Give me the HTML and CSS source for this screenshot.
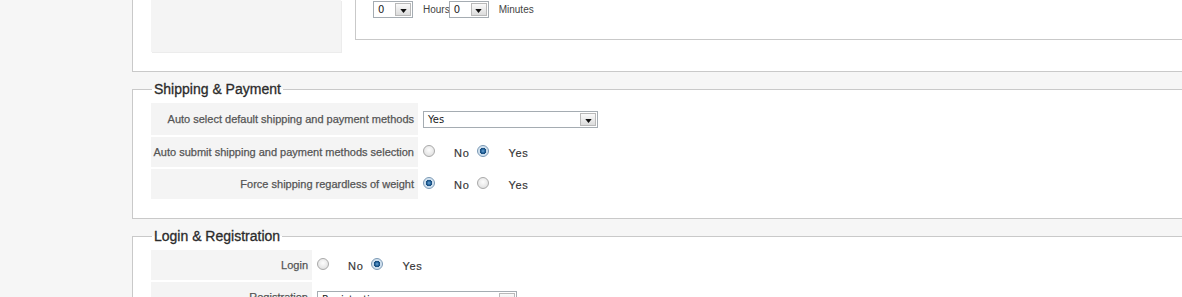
FILE: index.html
```html
<!DOCTYPE html>
<html lang="en">
<head>
  <meta charset="UTF-8">
  <title>Checkout Settings</title>
  <link rel="stylesheet" href="styles.css">
</head>
<body>
<div class="main">
  <!-- Previous section, scrolled past -->
  <div class="top-panel">
    <div class="top-label"></div>
    <div class="time-box">
      <span class="combo combo-small"><span class="combo-val">0</span><span class="combo-btn"><svg viewBox="0 0 8 5"><path d="M0 0h8L4 5z"/></svg></span></span>
      <span class="time-unit">Hours</span>
      <span class="combo combo-small"><span class="combo-val">0</span><span class="combo-btn"><svg viewBox="0 0 8 5"><path d="M0 0h8L4 5z"/></svg></span></span>
      <span class="time-unit">Minutes</span>
    </div>
  </div>

  <!-- Shipping & Payment -->
  <fieldset class="section">
    <legend>Shipping &amp; Payment</legend>
    <div class="rows rows-shipping">
      <div class="key">Auto select default shipping and payment methods</div>
      <div class="val">
        <span class="combo combo-wide"><span class="combo-val">Yes</span><span class="combo-btn"><svg viewBox="0 0 8 5"><path d="M0 0h8L4 5z"/></svg></span></span>
      </div>
      <div class="key">Auto submit shipping and payment methods selection</div>
      <div class="val">
        <label class="opt"><input type="radio" name="autosubmit"><span>No</span></label>
        <label class="opt"><input type="radio" name="autosubmit" checked><span>Yes</span></label>
      </div>
      <div class="key">Force shipping regardless of weight</div>
      <div class="val">
        <label class="opt"><input type="radio" name="forceship" checked><span>No</span></label>
        <label class="opt"><input type="radio" name="forceship"><span>Yes</span></label>
      </div>
    </div>
  </fieldset>

  <!-- Login & Registration -->
  <fieldset class="section">
    <legend>Login &amp; Registration</legend>
    <div class="rows rows-login">
      <div class="key">Login</div>
      <div class="val">
        <label class="opt"><input type="radio" name="login"><span>No</span></label>
        <label class="opt"><input type="radio" name="login" checked><span>Yes</span></label>
      </div>
      <div class="key">Registration</div>
      <div class="val val-top">
        <span class="combo combo-reg"><span class="combo-val">Registration</span><span class="combo-btn"><svg viewBox="0 0 8 5"><path d="M0 0h8L4 5z"/></svg></span></span>
      </div>
    </div>
  </fieldset>
</div>
</body>
</html>
```

FILE: styles.css
```css
body {
  margin: 0;
  background-color: #f6f6f6;
  font-family: "Liberation Sans", Arial, sans-serif;
  font-size: 11px;
  color: #333;
  overflow: hidden;
}

.main {
  margin-left: 132px;
}

/* Panel cut off at the top of the window */
.top-panel {
  display: flex;
  align-items: flex-start;
  height: 71px;
  padding-left: 18px;
  background-color: #fff;
  border-left: 1px solid #c9c9c9;
  border-bottom: 1px solid #c9c9c9;
  margin-bottom: 9px;
}

.top-label {
  width: 190px;
  height: 52px;
  background-color: #f4f4f4;
  box-shadow: 1px 1px 0 #ececec;
}

.time-box {
  flex: 1;
  height: 40px;
  margin-left: 14px;
  padding: 1px 0 0 17px;
  box-sizing: border-box;
  border-left: 1px solid #c9c9c9;
  border-bottom: 1px solid #c9c9c9;
  display: flex;
  align-items: flex-start;
}

.time-unit {
  font-size: 10px;
  line-height: 17px;
  margin: 0 -1px 0 10px;
  color: #444;
}

/* Sections */
.section {
  margin: 0 0 9px;
  padding: 6px 0 19px 18px;
  background-color: #fff;
  border: 1px solid #c9c9c9;
  border-right: none;
  min-inline-size: 0;
}

.section legend {
  font-size: 14px;
  line-height: 16px;
  color: #2b2b2b;
  padding: 0 2px;
  margin-left: 1px;
  -webkit-text-stroke: 0.3px #2b2b2b;
}

.rows {
  display: grid;
  row-gap: 2px;
}

.rows-shipping {
  grid-template-columns: 267px 1fr;
  grid-template-rows: 32px 30px 30px;
}

.rows-login {
  grid-template-columns: 161px 1fr;
  grid-template-rows: 30px 30px;
}

.key {
  background-color: #f4f4f4;
  color: #555;
  -webkit-text-stroke: 0.25px #555;
  white-space: nowrap;
  padding-right: 4px;
  display: flex;
  align-items: center;
  justify-content: flex-end;
}

.val {
  display: flex;
  align-items: center;
  padding-left: 5px;
}

.val-top {
  align-items: flex-start;
  padding-top: 9px;
}

/* Old style combo boxes */
.combo {
  display: inline-flex;
  align-items: center;
  height: 17px;
  box-sizing: border-box;
  border: 1px solid #a5acb2;
  background-color: #fff;
  padding: 1px;
}

.combo-val {
  flex: 1;
  padding-left: 3px;
  color: #222;
  font-family: "DejaVu Sans", sans-serif;
  font-size: 10px;
}

.combo-btn {
  width: 16px;
  height: 13px;
  box-sizing: border-box;
  border: 1px solid #b9b9b9;
  background: linear-gradient(#fafafa, #dcdcdc);
  display: flex;
  align-items: center;
  justify-content: center;
}

.combo-btn svg {
  width: 7px;
  height: 4px;
  margin-top: 2px;
  fill: #111;
}

.combo-small {
  width: 40px;
}

.combo-wide {
  width: 175px;
  margin-top: 1px;
}

.combo-reg {
  width: 200px;
}

/* Radio options */
.opt {
  display: inline-flex;
  align-items: center;
  margin-right: 8px;
}

.opt input {
  appearance: none;
  -webkit-appearance: none;
  width: 12px;
  height: 12px;
  margin: 0 0 2px;
  border: 1px solid #a9a9a9;
  border-radius: 50%;
  background: radial-gradient(circle at 50% 40%, #fdfdfd 0, #e4e4e4 70%, #d4d4d4 100%);
}

.opt input:checked {
  border-color: #7a98b4;
  background: radial-gradient(circle at 50% 50%, #6fa7d8 0, #1f5f96 2px, #17497a 3px, #c9dcec 3.5px, #eef4fa 100%);
}

.opt span {
  margin-left: 19px;
  letter-spacing: 0.7px;
  color: #333;
  -webkit-text-stroke: 0.15px #333;
  position: relative;
  top: 1px;
}
```
